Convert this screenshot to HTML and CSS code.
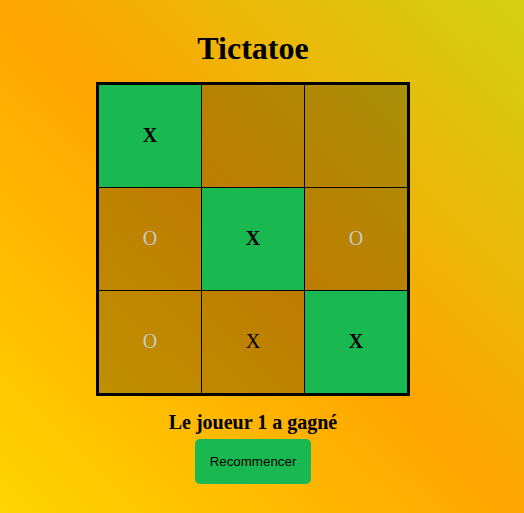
FILE: index.html
```html
<!DOCTYPE html>
<html lang="fr">
<head>
<meta charset="utf-8">
<title>Tictatoe</title>
<link rel="stylesheet" href="styles.css">
</head>
<body>
<main class="app">
  <h1 class="title">Tictatoe</h1>
  <div class="board">
    <div class="cell win">X</div>
    <div class="cell"></div>
    <div class="cell"></div>
    <div class="cell o">O</div>
    <div class="cell win">X</div>
    <div class="cell o">O</div>
    <div class="cell o">O</div>
    <div class="cell">X</div>
    <div class="cell win">X</div>
  </div>
  <p class="status">Le joueur 1 a gagné</p>
  <button class="restart" type="button">Recommencer</button>
</main>
</body>
</html>
```

FILE: styles.css
```css
html, body {
  margin: 0;
  height: 100%;
}
body {
  background: linear-gradient(to top right, #ffd400 0%, #ffa500 50%, #d2d012 100%);
  font-family: "Liberation Serif", serif;
}
.app {
  display: flex;
  flex-direction: column;
  align-items: center;
  padding: 30px 18px 0 0;
}
.title {
  margin: 0;
  font-size: 32px;
  line-height: 37px;
  font-weight: bold;
}
.board {
  margin-top: 15px;
  display: grid;
  grid-template-columns: 103px 103px 102px;
  grid-template-rows: 103px 103px 102px;
  border: 3px solid #000;
}
.cell {
  display: flex;
  align-items: center;
  justify-content: center;
  background: rgba(0, 0, 0, 0.25);
  border-right: 1px solid #000;
  border-bottom: 1px solid #000;
  font-size: 20px;
  line-height: 22px;
  padding-bottom: 2px;
  color: #000;
}
.cell:nth-child(3n) { border-right: 0; }
.cell:nth-child(n+7) { border-bottom: 0; }
.cell.o { color: #c9c9c9; }
.cell.win {
  background: #19b851;
  font-weight: bold;
}
.status {
  margin: 15px 0 0;
  font-size: 20px;
  line-height: 23px;
  font-weight: bold;
}
.restart {
  margin-top: 5px;
  padding: 14px 15px;
  background: #19b851;
  border: 0;
  border-radius: 5px;
  font-family: "Liberation Sans", Arial, sans-serif;
  font-size: 13.333px;
  line-height: 17px;
  color: #000;
}
```
